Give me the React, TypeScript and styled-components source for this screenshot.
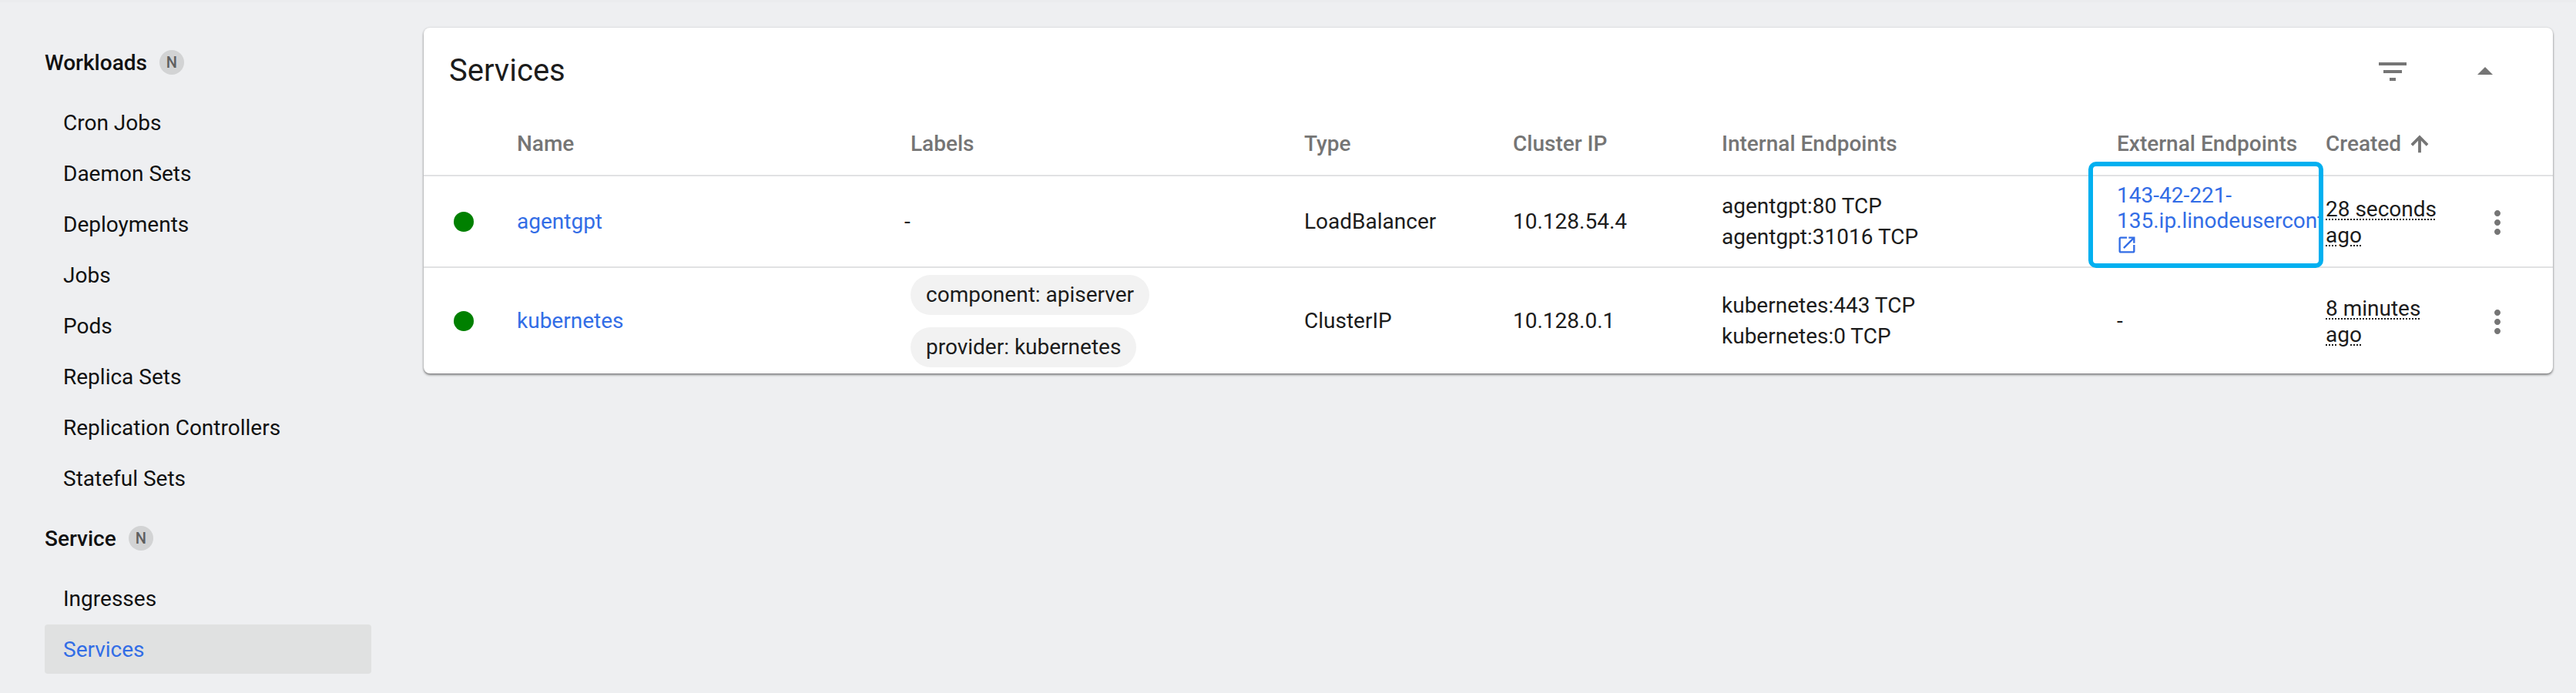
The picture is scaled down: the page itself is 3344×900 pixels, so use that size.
import React from "react";
import styled, { createGlobalStyle } from "styled-components";

const GlobalStyle = createGlobalStyle`
  html, body {
    margin: 0;
    height: 900px;
    overflow: hidden;
    background: #eeeff1;
    font-family: Roboto, "Liberation Sans", sans-serif;
    color: #1a1a1a;
  }
`;

const Page = styled.div`
  display: flex;
  align-items: flex-start;
  height: 900px;
  padding: 33px 30px 0 58px;
  box-sizing: border-box;
  border-top: 3px solid #ebecee;
`;

const Sidebar = styled.nav`
  flex: 0 0 424px;
  margin-right: 68px;
  display: flex;
  flex-direction: column;
`;

const SectionTitle = styled.div<{ $first?: boolean }>`
  display: flex;
  align-items: center;
  gap: 16px;
  height: 32px;
  margin-top: ${(p) => (p.$first ? "29px" : "28px")};
  margin-bottom: 30px;
  font-size: 28px;
  font-weight: 500;
  color: #111;
`;

const Badge = styled.span`
  display: flex;
  justify-content: center;
  align-items: center;
  width: 32px;
  height: 32px;
  border-radius: 50%;
  background: #d2d3d4;
  font-size: 20px;
  font-weight: 500;
  color: #5f5f5f;
`;

const NavItem = styled.a<{ $active?: boolean }>`
  display: flex;
  align-items: center;
  height: 64px;
  margin-bottom: 2px;
  padding-left: 24px;
  border-radius: 4px;
  font-size: 28px;
  color: ${(p) => (p.$active ? "#326de6" : "#111")};
  background: ${(p) => (p.$active ? "#e0e1e1" : "transparent")};
`;

const Card = styled.section`
  flex: 0 0 2764px;
  border-radius: 8px;
  background: #fff;
  box-shadow: 0 2px 3px rgba(0, 0, 0, 0.45), 0 0 3px rgba(0, 0, 0, 0.12);
`;

const CardHeader = styled.header`
  display: flex;
  align-items: center;
  height: 114px;
  padding: 0 64px 0 33px;
`;

const CardTitle = styled.h1`
  flex: 1;
  margin: 0 0 4px;
  font-size: 40px;
  font-weight: 400;
  color: #1c1c1c;
`;

const ToolButton = styled.button`
  display: flex;
  padding: 0;
  margin-left: 72px;
  border: none;
  background: none;
  color: #757575;
`;

const Row = styled.div<{ $height: number; $last?: boolean }>`
  display: grid;
  grid-template-columns: 121px 511px 511px 271px 271px 513px 271px 165px 1fr;
  align-items: center;
  height: ${(p) => p.$height}px;
  box-sizing: border-box;
  border-bottom: ${(p) => (p.$last ? "none" : "2px solid #e1e2e3")};
`;

const HeadCell = styled.div`
  display: flex;
  align-items: center;
  gap: 8px;
  padding-bottom: 4px;
  font-size: 28px;
  font-weight: 500;
  color: #757575;
  white-space: nowrap;
`;

const Cell = styled.div<{ $outdent?: boolean }>`
  font-size: 28px;
  line-height: 40px;
  color: #1c1c1c;
  margin-left: ${(p) => (p.$outdent ? "-8px" : "0")};
`;

const StatusCell = styled.div`
  display: flex;
  padding-left: 39px;
`;

const StatusDot = styled.span`
  width: 26px;
  height: 26px;
  border-radius: 50%;
  background: #008000;
`;

const Link = styled.a`
  color: #326de6;
  text-decoration: none;
`;

const Chips = styled.div`
  display: flex;
  flex-direction: column;
  align-items: flex-start;
  gap: 16px;
`;

const Chip = styled.span`
  display: flex;
  align-items: center;
  height: 52px;
  padding: 0 20px;
  border-radius: 26px;
  background: #f2f2f2;
  font-size: 28px;
  color: #1c1c1c;
`;

const EndpointLine = styled.div`
  white-space: nowrap;
`;

const ExternalCell = styled.div`
  position: relative;
  align-self: stretch;
  display: flex;
  align-items: center;
  font-size: 28px;
  line-height: 33px;
`;

const ExternalClip = styled.div`
  width: 266px;
  margin-bottom: 6px;
  overflow: hidden;
`;

const OpenIcon = styled.svg`
  display: block;
  margin: 1px 0 0 -1px;
  width: 28px;
  height: 28px;
  color: #326de6;
`;

// the blue frame that was drawn over the screenshot
const Callout = styled.div`
  position: absolute;
  top: -19px;
  left: -37px;
  width: 305px;
  height: 138px;
  box-sizing: border-box;
  border: 6px solid #00b0f0;
  border-radius: 10px;
  pointer-events: none;
`;

const Age = styled.div`
  padding-top: 3px;
  font-size: 28px;
  line-height: 34px;
  color: #1c1c1c;
`;

const AgeText = styled.span`
  text-decoration: underline dotted #1c1c1c 2px;
  text-underline-offset: 3px;
`;

const MenuCell = styled.div`
  display: flex;
  padding: 2px 0 0 34px;
  color: #757575;
`;

const FilterIcon = () => (
  <svg width="48" height="48" viewBox="0 0 24 24" fill="currentColor">
    <path d="M10 18h4v-2h-4v2zM3 6v2h18V6H3zm3 7h12v-2H6v2z" />
  </svg>
);

const CollapseIcon = () => (
  <svg width="48" height="48" viewBox="0 0 24 24" fill="currentColor">
    <path d="M7 14l5-5 5 5z" />
  </svg>
);

const SortIcon = () => (
  <svg
    width="32"
    height="32"
    viewBox="0 0 24 24"
    fill="currentColor"
    stroke="currentColor"
    strokeWidth="0.8"
  >
    <path d="M4 12l1.41 1.41L11 7.83V20h2V7.83l5.58 5.59L20 12l-8-8-8 8z" />
  </svg>
);

const KebabIcon = () => (
  <svg width="48" height="48" viewBox="0 0 24 24" fill="currentColor">
    <path d="M12 8c1.1 0 2-.9 2-2s-.9-2-2-2-2 .9-2 2 .9 2 2 2zm0 2c-1.1 0-2 .9-2 2s.9 2 2 2 2-.9 2-2-.9-2-2-2zm0 6c-1.1 0-2 .9-2 2s.9 2 2 2 2-.9 2-2-.9-2-2-2z" />
  </svg>
);

const workloads = [
  "Cron Jobs",
  "Daemon Sets",
  "Deployments",
  "Jobs",
  "Pods",
  "Replica Sets",
  "Replication Controllers",
  "Stateful Sets",
];

export default function App() {
  return (
    <>
      <GlobalStyle />
      <Page>
        <Sidebar>
          <SectionTitle $first>
            Workloads <Badge>N</Badge>
          </SectionTitle>
          {workloads.map((item) => (
            <NavItem key={item}>{item}</NavItem>
          ))}
          <SectionTitle>
            Service <Badge>N</Badge>
          </SectionTitle>
          <NavItem>Ingresses</NavItem>
          <NavItem $active>Services</NavItem>
        </Sidebar>

        <Card>
          <CardHeader>
            <CardTitle>Services</CardTitle>
            <ToolButton>
              <FilterIcon />
            </ToolButton>
            <ToolButton>
              <CollapseIcon />
            </ToolButton>
          </CardHeader>

          <Row $height={79}>
            <div />
            <HeadCell>Name</HeadCell>
            <HeadCell>Labels</HeadCell>
            <HeadCell>Type</HeadCell>
            <HeadCell>Cluster IP</HeadCell>
            <HeadCell>Internal Endpoints</HeadCell>
            <HeadCell>External Endpoints</HeadCell>
            <HeadCell>
              Created <SortIcon />
            </HeadCell>
            <div />
          </Row>

          <Row $height={119}>
            <StatusCell>
              <StatusDot />
            </StatusCell>
            <Cell>
              <Link>agentgpt</Link>
            </Cell>
            <Cell $outdent>-</Cell>
            <Cell>LoadBalancer</Cell>
            <Cell>10.128.54.4</Cell>
            <Cell>
              <EndpointLine>agentgpt:80 TCP</EndpointLine>
              <EndpointLine>agentgpt:31016 TCP</EndpointLine>
            </Cell>
            <ExternalCell>
              <ExternalClip>
                <Link>143-42-221-135.ip.linodeusercontent.com</Link>
                <OpenIcon viewBox="0 0 24 24" fill="currentColor">
                  <path d="M19 19H5V5h7V3H5c-1.11 0-2 .9-2 2v14c0 1.1.89 2 2 2h14c1.1 0 2-.9 2-2v-7h-2v7zM14 3v2h3.59l-9.83 9.83 1.41 1.41L19 6.41V10h2V3h-7z" />
                </OpenIcon>
              </ExternalClip>
              <Callout />
            </ExternalCell>
            <Age>
              <AgeText>28 seconds</AgeText> <AgeText>ago</AgeText>
            </Age>
            <MenuCell>
              <KebabIcon />
            </MenuCell>
          </Row>

          <Row $height={137} $last>
            <StatusCell>
              <StatusDot />
            </StatusCell>
            <Cell>
              <Link>kubernetes</Link>
            </Cell>
            <Chips>
              <Chip>component: apiserver</Chip>
              <Chip>provider: kubernetes</Chip>
            </Chips>
            <Cell>ClusterIP</Cell>
            <Cell>10.128.0.1</Cell>
            <Cell>
              <EndpointLine>kubernetes:443 TCP</EndpointLine>
              <EndpointLine>kubernetes:0 TCP</EndpointLine>
            </Cell>
            <Cell>-</Cell>
            <Age>
              <AgeText>8 minutes</AgeText> <AgeText>ago</AgeText>
            </Age>
            <MenuCell>
              <KebabIcon />
            </MenuCell>
          </Row>
        </Card>
      </Page>
    </>
  );
}
